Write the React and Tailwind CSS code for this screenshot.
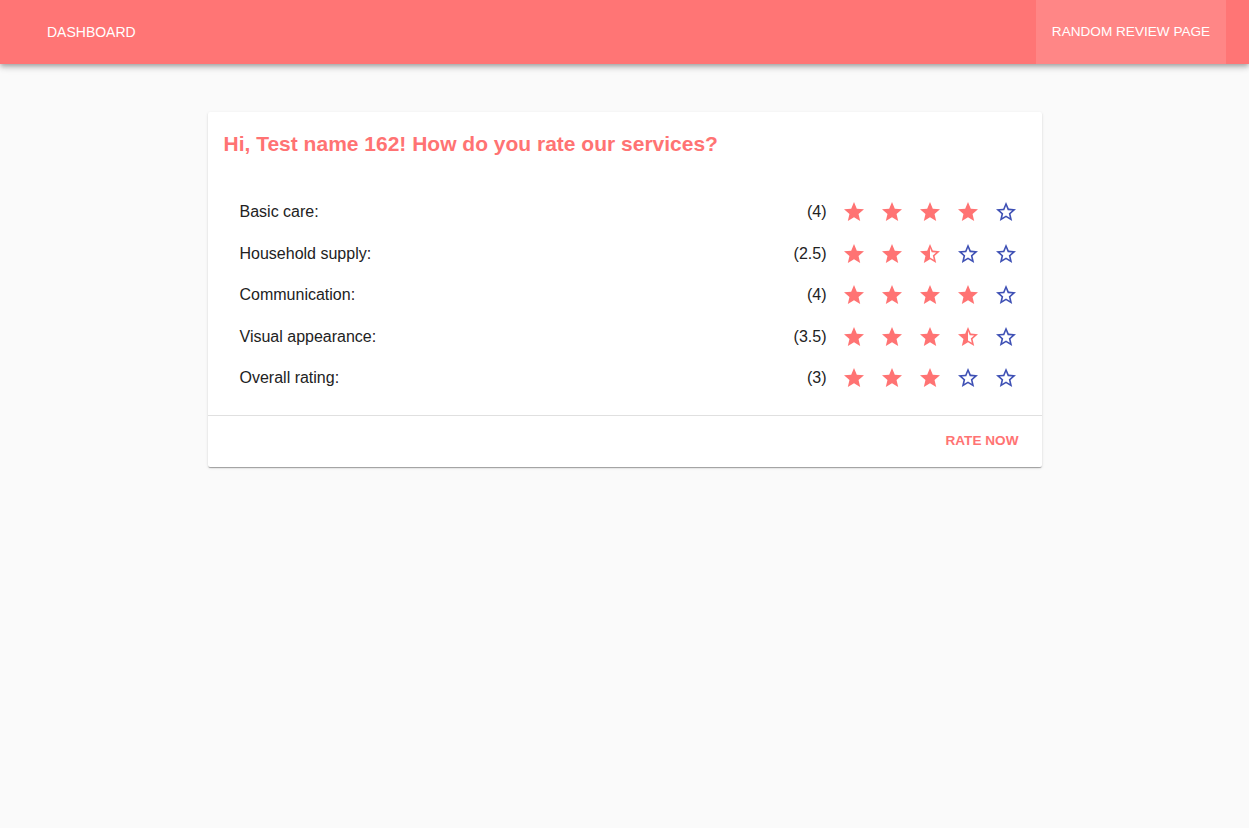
import React from "react";

const STAR = "M12 17.27L18.18 21l-1.64-7.03L22 9.24l-7.19-.61L12 2 9.19 8.63 2 9.24l5.46 4.73L5.82 21z";
const STAR_BORDER = "M22 9.24l-7.19-.62L12 2 9.19 8.63 2 9.24l5.46 4.73L5.82 21 12 17.27 18.18 21l-1.63-7.03L22 9.24zM12 15.4l-3.76 2.27 1-4.28-3.32-2.88 4.38-.38L12 6.1l1.71 4.04 4.38.38-3.32 2.88 1 4.28L12 15.4z";
const STAR_HALF = "M22 9.24l-7.19-.62L12 2 9.19 8.63 2 9.24l5.46 4.73L5.82 21 12 17.27 18.18 21l-1.63-7.03L22 9.24zM12 15.4V6.1l1.71 4.04 4.38.38-3.32 2.88 1 4.28L12 15.4z";

function Star({ type }) {
  const d = type === "full" ? STAR : type === "half" ? STAR_HALF : STAR_BORDER;
  const color = type === "empty" ? "#3f51b5" : "#ff7373";
  return (
    <svg width="24" height="24" viewBox="0 0 24 24" className="shrink-0">
      <path d={d} fill={color} />
    </svg>
  );
}

const rows = [
  ["Basic care:", 4],
  ["Household supply:", 2.5],
  ["Communication:", 4],
  ["Visual appearance:", 3.5],
  ["Overall rating:", 3],
];

export default function App() {
  return (
    <div
      className="min-h-[828px] bg-[#fafafa]"
      style={{ fontFamily: '"Liberation Sans", Arial, sans-serif' }}
    >
      <header className="h-16 bg-[#ff7575] flex items-stretch justify-between pl-[31px] pr-[23px] shadow-[0_2px_4px_-1px_rgba(0,0,0,0.2),0_4px_5px_0_rgba(0,0,0,0.14),0_1px_10px_0_rgba(0,0,0,0.12)] relative z-10">
        <div className="flex items-center px-4 text-white text-sm uppercase">Dashboard</div>
        <div className="w-[190px] flex items-center justify-center text-white text-[13.6px] uppercase bg-[#ff8686]">Random review page</div>
      </header>
      <main className="pt-12 flex justify-center">
        <div className="w-[834px] bg-white rounded-[2px] shadow-[0_2px_1px_-1px_rgba(0,0,0,0.2),0_1px_1px_0_rgba(0,0,0,0.14),0_1px_3px_0_rgba(0,0,0,0.12)]">
          <div className="h-16 px-4 pt-4">
            <h1 className="text-[21px] leading-8 font-bold text-[#ff7373]">
              Hi, Test name 162! How do you rate our services?
            </h1>
          </div>
          <div className="pt-[15.5px] pb-[16px] pl-8 pr-6">
            {rows.map(([label, val]) => (
              <div key={label} className="h-[41.5px] flex items-center text-base text-[#222]">
                <span className="flex-1">{label}</span>
                <span className="mr-[15px]">({val})</span>
                <div className="flex gap-[14px]">
                  {[1, 2, 3, 4, 5].map((i) => (
                    <Star
                      key={i}
                      type={val >= i ? "full" : val >= i - 0.5 ? "half" : "empty"}
                    />
                  ))}
                </div>
              </div>
            ))}
          </div>
          <div className="border-t border-[#e0e0e0] h-[52px] flex items-center justify-end pr-[23px]">
            <span className="text-[13.6px] font-bold uppercase text-[#ff7373]">Rate now</span>
          </div>
        </div>
      </main>
    </div>
  );
}
